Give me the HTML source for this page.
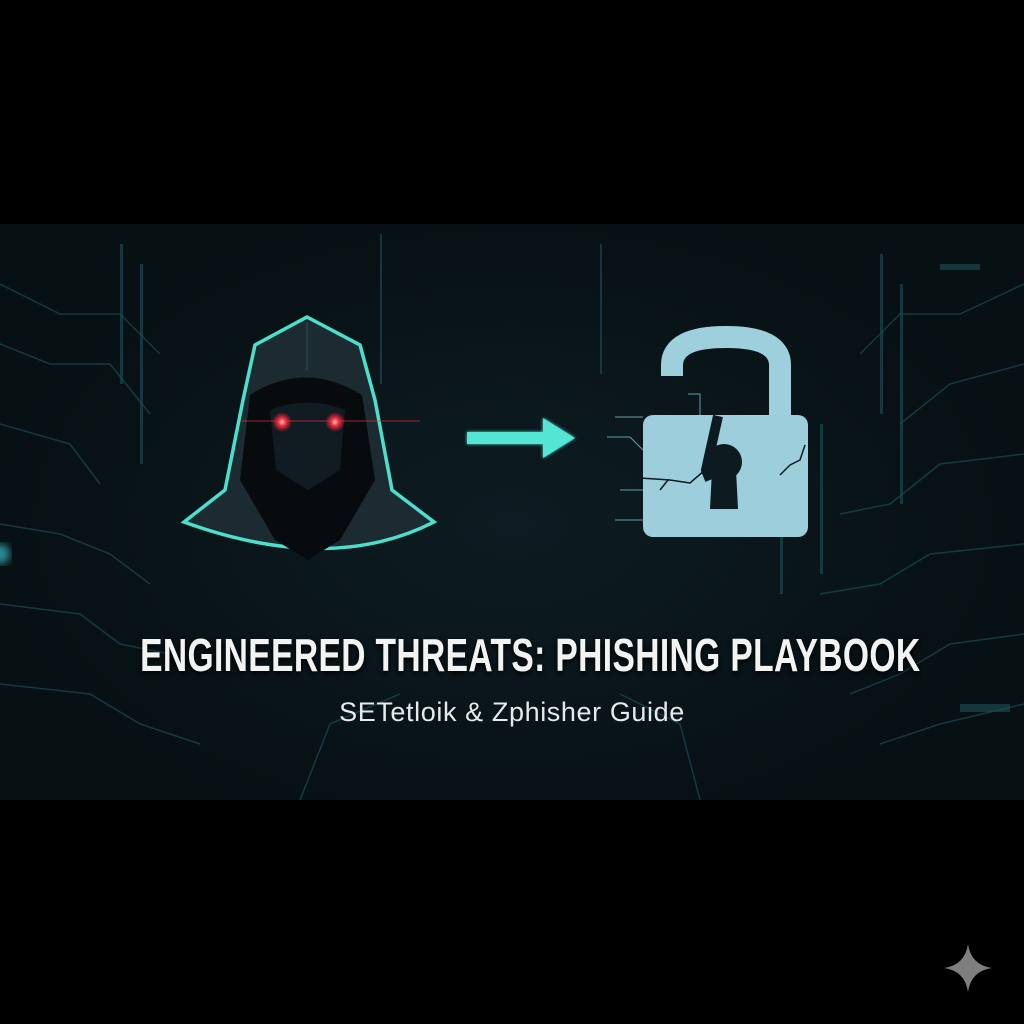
<!DOCTYPE html>
<html><head><meta charset="utf-8"><style>
html,body{margin:0;padding:0;background:#000;width:1024px;height:1024px;overflow:hidden}
.band{position:absolute;left:0;top:224px;width:1024px;height:576px;overflow:hidden;
background:radial-gradient(ellipse 520px 320px at 512px 300px,#0d1c22 0%,#0a161b 50%,#071013 100%)}
.t{position:absolute;left:0;width:1024px;text-align:center;color:#f2f4f4;white-space:nowrap}
#t1{top:628px;font-family:"Liberation Sans Narrow","Liberation Sans",sans-serif;font-weight:bold;font-size:46px;letter-spacing:0.5px;transform:scaleX(0.73);transform-origin:519px 0;text-shadow:0 2px 6px #000}
#t2{top:697px;font-family:"Liberation Sans",sans-serif;font-size:27px;letter-spacing:0.6px;color:#e6eaea}
</style></head><body>
<div class="band">
<svg width="1024" height="576" style="position:absolute;left:0;top:0">
<defs>
<filter id="g"><feGaussianBlur stdDeviation="4"/></filter>
<filter id="g2"><feGaussianBlur stdDeviation="1.5"/></filter>
<radialGradient id="eye"><stop offset="0" stop-color="#ffd0d0"/><stop offset=".35" stop-color="#ff3040"/><stop offset="1" stop-color="#ff2030" stop-opacity="0"/></radialGradient>
</defs>
<g stroke="#1d4a52" stroke-width="1.5" fill="none" opacity=".7">
<path d="M0 60 L60 90 L120 90 L160 130"/><path d="M0 120 L50 140 L110 140 L150 190"/>
<path d="M0 200 L70 220 L100 260"/><path d="M0 300 L60 310 L110 330 L150 360"/>
<path d="M0 380 L80 390 L120 420 L170 430"/><path d="M0 460 L90 470 L140 500 L200 520"/>
<path d="M1024 60 L960 90 L900 90 L860 130"/><path d="M1024 140 L950 160 L900 200"/>
<path d="M1024 230 L940 240 L890 280 L840 290"/><path d="M1024 320 L930 330 L880 360 L820 370"/>
<path d="M1024 410 L950 420 L900 450 L850 470"/><path d="M1024 480 L940 500 L880 520"/>
<path d="M300 576 L330 500 L400 470"/><path d="M700 576 L680 500 L620 470"/>
</g>
<g fill="#1e5058" opacity=".6">
<rect x="120" y="20" width="3" height="140"/><rect x="140" y="40" width="3" height="200"/>
<rect x="880" y="30" width="3" height="160"/><rect x="900" y="60" width="3" height="220"/>
<rect x="380" y="10" width="2" height="150"/><rect x="600" y="20" width="2" height="130"/>
<rect x="780" y="250" width="3" height="120"/><rect x="820" y="200" width="3" height="150"/>
<rect x="940" y="40" width="40" height="6"/><rect x="960" y="480" width="50" height="8"/>
</g>
<circle cx="0" cy="330" r="10" fill="#2a8a90" filter="url(#g)"/>
<g transform="translate(0,-224)">
<path d="M307 317 L360 345 L375 400 L392 490 L434 522 Q330 575 184 522 L225 490 L243 400 L255 345 Z" fill="#1c2a32" stroke="#4ce0cc" stroke-width="3.5"/>
<path d="M250 395 Q305 360 362 395 L375 480 L340 540 L308 560 L275 540 L240 480 Z" fill="#070b0e"/>
<path d="M270 410 Q308 395 345 410 L340 470 L308 490 L276 470 Z" fill="#101b22"/>
<path d="M307 322 L307 370" stroke="#2c3c44" stroke-width="2"/>
<line x1="240" y1="421" x2="420" y2="421" stroke="#ff3040" stroke-width="1" opacity=".6"/>
<circle cx="282" cy="422" r="10" fill="url(#eye)"/><circle cx="335" cy="422" r="10" fill="url(#eye)"/>
<g filter="url(#g2)"><rect x="467" y="432" width="80" height="12" fill="#4ee0d0"/><path d="M543 418 L575 438 L543 458 Z" fill="#4ee0d0"/></g>
<rect x="467" y="432" width="80" height="12" fill="#55e5d5"/><path d="M543 418 L575 438 L543 458 Z" fill="#55e5d5"/>
<path d="M672 376 L672 365 Q672 337 726 337 Q780 337 780 365 L780 416" fill="none" stroke="#9dd0dc" stroke-width="22"/>
<rect x="643" y="415" width="165" height="122" rx="10" fill="#9ccfdb"/>
<path d="M718 416 L706 470 L710 480" stroke="#0d1a20" stroke-width="10" fill="none"/>
<circle cx="724" cy="462" r="18" fill="#0d1a20"/><path d="M712 470 L736 470 L738 509 L710 509 Z" fill="#0d1a20"/>
<path d="M610 470 L640 478 L670 480 L690 483 L705 470 M660 490 L668 480 M790 465 L800 460 L805 445 M790 465 L780 475" stroke="#0d1a20" stroke-width="1.5" fill="none"/>
<g stroke="#7dc0cc" stroke-width="1" fill="none" opacity=".8"><path d="M615 417 L643 417 M607 437 L630 437 L643 450 M620 490 L643 490 M615 520 L643 520 M688 394 L700 394 L700 415"/></g>
</g>
</svg>
</div>
<div class="t" id="t1">ENGINEERED THREATS: PHISHING PLAYBOOK</div>
<div class="t" id="t2">SETetloik &amp; Zphisher Guide</div>
<svg width="60" height="60" style="position:absolute;left:938px;top:938px"><path d="M30 6 Q33 27 54 30 Q33 33 30 54 Q27 33 6 30 Q27 27 30 6 Z" fill="#7f7f7f"/></svg>
</body></html>
